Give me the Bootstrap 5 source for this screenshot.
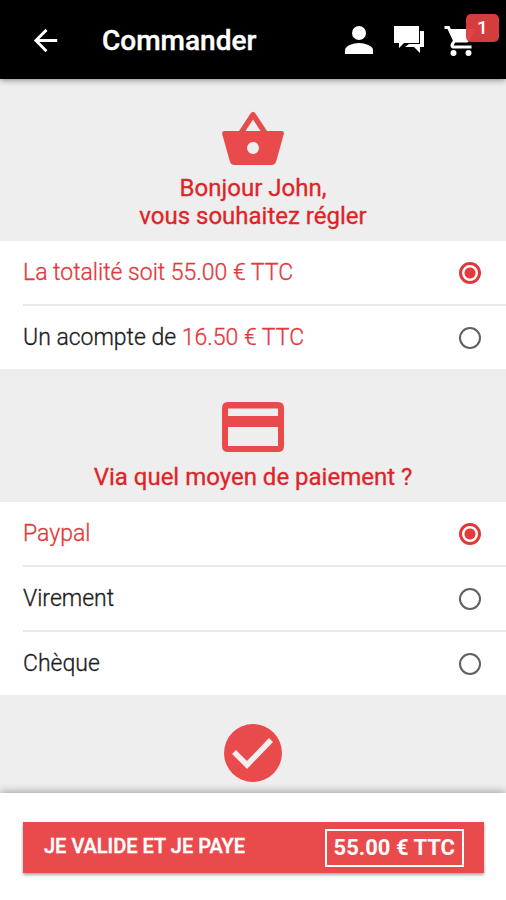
<!DOCTYPE html>
<html lang="fr">
<head>
<meta charset="utf-8">
<meta name="viewport" content="width=device-width, initial-scale=1">
<title>Commander</title>
<link href="https://cdn.jsdelivr.net/npm/bootstrap@5.3.0/dist/css/bootstrap.min.css" rel="stylesheet">
<style>
body { font-family: Roboto, "Liberation Sans", sans-serif; background: #eee; color: #1c1c1c; }
main { padding-top: 1px; }
.topbar { height: 79px; padding: 2px 27px 0 28px; background: #000; box-shadow: 0 1px 6px rgba(0,0,0,.45); }
.topbar h1 { font-size: 28px; line-height: 36px; font-weight: 500; margin-left: 39px; -webkit-text-stroke: .4px; }
.topbar .tools { gap: 15px; }
.icon-button { border: 0; background: none; padding: 0; color: #fff; line-height: 0; }
.cart-count { position: absolute; left: 23px; top: -9px; width: 33px; height: 28px; border-radius: 5px; background: rgba(222,62,64,.96); font-size: 19px; line-height: 27px; font-weight: 500; }
.step { padding: 31px 24px 11px; color: #de2428; text-align: center; }
.step-icon { height: 54px; color: #e94a4b; }
.step h2 { font-size: 24px; line-height: 28px; font-weight: 400; margin: 9px 0 0; -webkit-text-stroke: .3px; }
.choices { background: #fff; padding-left: 23px; }
.choice { height: 63px; padding-right: 25px; font-size: 23px; line-height: 28px; font-weight: 300; -webkit-text-stroke: .3px; cursor: pointer; }
.choice + .choice { height: 65px; border-top: 2px solid #e9e9e9; }
.choice:has(:checked) > span, .amount { color: #e2383b; }
.choice input { appearance: none; width: 22px; height: 22px; margin: 0; border: 2px solid #606060; border-radius: 50%; flex: none; }
.choice input:checked { border: 3px solid #e0383a; background: radial-gradient(circle, #e5393b 5px, #fff 6px); }
.paybar { background: #fff; padding: 29px 22px 27px 23px; box-shadow: 0 -1px 8px rgba(0,0,0,.35); }
.pay { border: 0; height: 51px; padding: 0 20px 0 21px; background: #e94b4c; color: #fff; font-size: 20px; font-weight: 500; box-shadow: 0 2px 3px rgba(0,0,0,.35); }
.pay-label { padding-bottom: 3px; -webkit-text-stroke: .4px; }
.pay-total { border: 2px solid #fff; padding: 0 7px; font-size: 22px; line-height: 34px; font-weight: 700; }
</style>
</head>
<body class="min-vh-100 d-flex flex-column">
<header class="topbar sticky-top d-flex align-items-center text-white">
  <button class="icon-button" type="button" aria-label="Retour"><svg width="35" height="35" viewBox="0 0 24 24" fill="currentColor"><path d="M20 11H7.8l5.6-5.6L12 4l-8 8 8 8 1.4-1.4L7.8 13H20z"/></svg></button>
  <h1 class="mb-0 me-auto">Commander</h1>
  <div class="tools d-flex align-items-center">
    <button class="icon-button" type="button" aria-label="Mon compte"><svg width="36" height="36" viewBox="0 0 36 36" fill="currentColor"><circle cx="18" cy="10" r="7"/><path d="M4 31v-4c0-4 8-7 14-7s14 3 14 7v4z"/></svg></button>
    <button class="icon-button" type="button" aria-label="Messages"><svg width="36" height="36" viewBox="0 0 36 36" fill="currentColor"><path d="M2 3h25v17H12l-5 5v-5H2z"/><path d="M28 8h4v16h-4v6l-6-6h-9l4-3h11z"/></svg></button>
    <button class="icon-button position-relative" type="button" aria-label="Panier, 1 article"><svg width="36" height="36" viewBox="0 0 24 24" fill="currentColor"><path d="M7 18a2 2 0 1 0 0 4 2 2 0 0 0 0-4zM1 2v2h2l3.6 7.6-1.4 2.4C4.500 15.400 5.500 17 7 17h12v-2H7.400a.25.25 0 0 1-.2-.4L8.100 13h7.500c.7 0 1.400-.4 1.700-1l3.600-6.500A1 1 0 0 0 20 4H5.200l-.9-2zM17 18a2 2 0 1 0 0 4 2 2 0 0 0 0-4z"/></svg><span class="cart-count">1</span></button>
  </div>
</header>
<main class="flex-grow-1">
  <form id="order">
    <section class="step">
      <div class="step-icon d-flex align-items-center justify-content-center"><svg width="62" height="54" viewBox="0 0 62 54" fill="currentColor"><path fill-rule="evenodd" d="M2.500 20H17L28.500 2.500q2.500-3.500 5 0L45 20h14.500q3 0 2.300 3l-7.500 27q-1 4-5 4H12.700q-4 0-5-4L.2 23Q-.5 20 2.500 20zM23.500 20h15L31 8.500zM31 31a6 6 0 1 0 0 12 6 6 0 0 0 0-12z"/></svg></div>
      <h2>Bonjour John,<br>vous souhaitez régler</h2>
    </section>
    <div class="choices">
      <label class="choice d-flex align-items-center justify-content-between"><span>La totalité soit 55.00 € TTC</span><input type="radio" name="amount" checked></label>
      <label class="choice d-flex align-items-center justify-content-between"><span>Un acompte de <span class="amount">16.50 € TTC</span></span><input type="radio" name="amount"></label>
    </div>
    <section class="step">
      <div class="step-icon d-flex align-items-center justify-content-center"><svg width="62" height="50" viewBox="0 0 62 50" fill="currentColor"><path fill-rule="evenodd" d="M6 0h50q6 0 6 6v38q0 6-6 6H6q-6 0-6-6V6Q0 0 6 0zM6 6.500V14h50V6.500zM6 25v19h50V25z"/></svg></div>
      <h2>Via quel moyen de paiement ?</h2>
    </section>
    <div class="choices">
      <label class="choice d-flex align-items-center justify-content-between"><span>Paypal</span><input type="radio" name="method" checked></label>
      <label class="choice d-flex align-items-center justify-content-between"><span>Virement</span><input type="radio" name="method"></label>
      <label class="choice d-flex align-items-center justify-content-between"><span>Chèque</span><input type="radio" name="method"></label>
    </div>
    <section class="step">
      <div class="step-icon d-flex align-items-center justify-content-center"><svg class="flex-shrink-0" width="58" height="58" viewBox="0 0 58 58"><circle cx="29" cy="29" r="29" fill="currentColor"/><path d="M10 28l13 13 24-25" fill="none" stroke="#f4eeee" stroke-width="5.500"/></svg></div>
    </section>
  </form>
</main>
<footer class="paybar sticky-bottom">
  <button class="pay w-100 d-flex align-items-center justify-content-between" type="submit" form="order"><span class="pay-label">JE VALIDE ET JE PAYE</span><span class="pay-total">55.00 € TTC</span></button>
</footer>
<script src="https://cdn.jsdelivr.net/npm/bootstrap@5.3.0/dist/js/bootstrap.bundle.min.js"></script>
</body>
</html>
